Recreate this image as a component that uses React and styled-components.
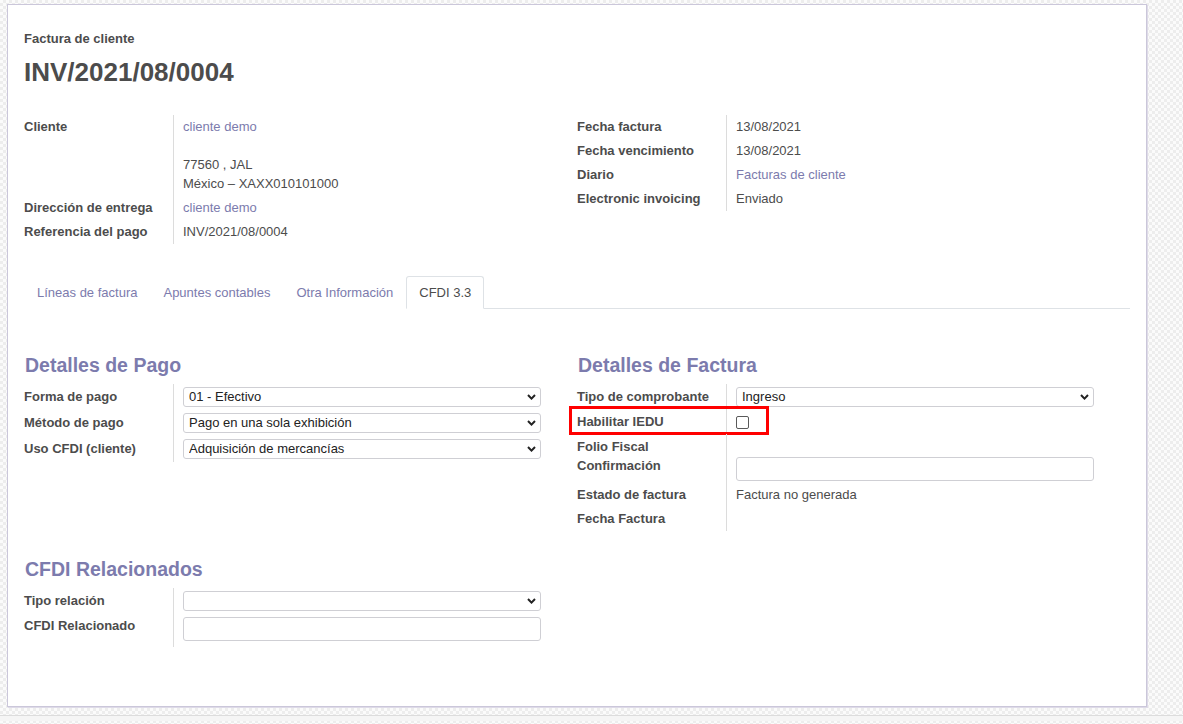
import React from "react";
import styled, { createGlobalStyle } from "styled-components";

const GlobalStyle = createGlobalStyle`
  html, body { margin: 0; padding: 0; }
  body {
    font-family: "Liberation Sans", Arial, sans-serif;
    font-size: 13px;
    color: #4c4c4c;
    background: repeating-conic-gradient(#ededed 0% 25%, #fbfbfb 0% 50%) 0 0 / 6px 6px;
  }
`;

const Page = styled.div`
  height: 724px;
  display: flex;
  flex-direction: column;
  overflow: hidden;
`;

const SheetArea = styled.div`
  height: 715px;
  padding: 4px 0 0 7px;
  box-sizing: border-box;
`;

const BottomStrip = styled.div`
  height: 5px;
  border-top: 1px solid #dcdcdc;
  background: #f5f5f5;
`;

const Sheet = styled.div`
  width: 1140px;
  height: 703px;
  box-sizing: border-box;
  background: #fff;
  border: 1px solid #cbc7da;
  box-shadow: 1px 1px 0 #dedbe8;
  padding: 24px 16px 0;
`;

const Subtitle = styled.div`
  font-weight: bold;
  line-height: 20px;
`;

const Title = styled.h1`
  margin: 8px 0 0;
  font-size: 26px;
  line-height: 31px;
  font-weight: bold;
  color: #4c4c4c;
`;

const Columns = styled.div`
  display: grid;
  grid-template-columns: 1fr 1fr;
  margin-top: ${(p) => p.$mt || 0}px;
`;

const Group = styled.div`
  padding-right: 36px;
  display: flex;
  flex-direction: column;
`;

const Row = styled.div`
  position: relative;
  display: grid;
  grid-template-columns: 150px 1fr;
  min-height: ${(p) => p.$h || 24}px;
  align-items: ${(p) => (p.$top ? "start" : "center")};
`;

const Label = styled.div`
  align-self: stretch;
  display: flex;
  align-items: ${(p) => (p.$top ? "flex-start" : "center")};
  padding-top: ${(p) => p.$pt || 0}px;
  font-weight: bold;
  line-height: ${(p) => p.$lh || 20}px;
  border-right: 1px solid #dcdcdc;
  box-sizing: border-box;
`;

const Value = styled.div`
  padding-left: 9px;
  padding-top: ${(p) => p.$pt || 0}px;
  padding-bottom: ${(p) => p.$pb || 0}px;
  line-height: ${(p) => p.$lh || 20}px;
  color: ${(p) => (p.$link ? "#7c7bad" : "#4c4c4c")};
`;

const Link = styled.div`
  color: #7c7bad;
`;

const Address = styled.div`
  line-height: 19px;
`;

const TabList = styled.div`
  display: flex;
  margin-top: 32px;
  border-bottom: 1px solid #dee2e6;
`;

const Tab = styled.div`
  height: 33px;
  box-sizing: border-box;
  margin-bottom: -1px;
  padding: 0 12px;
  line-height: 31px;
  border: 1px solid ${(p) => (p.$active ? "#dee2e6" : "transparent")};
  border-bottom-color: ${(p) => (p.$active ? "#fff" : "transparent")};
  border-radius: 3px 3px 0 0;
  background: #fff;
  color: ${(p) => (p.$active ? "#4c4c4c" : "#7c7bad")};
`;

const SectionTitle = styled.h2`
  margin: ${(p) => p.$mt || 0}px 0 6.5px;
  padding-left: 1px;
  font-size: 19.5px;
  line-height: 23.5px;
  font-weight: bold;
  color: #7c7bad;
`;

const SelectWrap = styled.div`
  position: relative;
  height: 20px;
`;

const NativeSelect = styled.select`
  appearance: none;
  -webkit-appearance: none;
  width: 100%;
  height: 20px;
  box-sizing: border-box;
  margin: 0;
  padding: 0 22px 0 5px;
  border: 1px solid #cfcfd4;
  border-radius: 3px;
  background: #fff;
  font-family: inherit;
  font-size: 13px;
  line-height: 18px;
  color: #222;
  outline: none;
`;

const Chevron = styled.svg`
  position: absolute;
  right: 5px;
  top: 7px;
  pointer-events: none;
`;

const TextInput = styled.input`
  display: block;
  width: 100%;
  height: 24px;
  box-sizing: border-box;
  margin: 0;
  border: 1px solid #cfcfd4;
  border-radius: 3px;
  background: #fff;
  font-family: inherit;
  font-size: 13px;
  outline: none;
`;

const CheckBox = styled.input`
  appearance: none;
  -webkit-appearance: none;
  display: block;
  width: 13px;
  height: 13px;
  margin: 0;
  box-sizing: border-box;
  border: 1px solid #5a5a5a;
  border-radius: 2px;
  background: #fff;
`;

const Highlight = styled.span`
  position: absolute;
  left: -8px;
  top: -4px;
  width: 200px;
  height: 29px;
  box-sizing: border-box;
  border: 3px solid #ff0000;
  pointer-events: none;
`;

function Select({ value }) {
  return (
    <SelectWrap>
      <NativeSelect defaultValue={value}>
        <option value={value}>{value}</option>
      </NativeSelect>
      <Chevron width="9" height="6" viewBox="0 0 9 6">
        <path d="M1 1 L4.5 4.6 L8 1" fill="none" stroke="#222" strokeWidth="2" />
      </Chevron>
    </SelectWrap>
  );
}

export default function App() {
  return (
    <Page>
      <GlobalStyle />
      <SheetArea>
        <Sheet>
          <Subtitle>Factura de cliente</Subtitle>
          <Title>INV/2021/08/0004</Title>

          <Columns $mt={27}>
            <Group>
              <Row $top>
                <Label $top $pt={2}>Cliente</Label>
                <Value $pt={2} $pb={3} $lh={19}>
                  <Link>cliente demo</Link>
                  <Address>
                    <br />
                    77560 , JAL
                    <br />
                    México – XAXX010101000
                  </Address>
                </Value>
              </Row>
              <Row>
                <Label>Dirección de entrega</Label>
                <Value $link>cliente demo</Value>
              </Row>
              <Row>
                <Label>Referencia del pago</Label>
                <Value>INV/2021/08/0004</Value>
              </Row>
            </Group>
            <Group>
              <Row>
                <Label>Fecha factura</Label>
                <Value>13/08/2021</Value>
              </Row>
              <Row>
                <Label>Fecha vencimiento</Label>
                <Value>13/08/2021</Value>
              </Row>
              <Row>
                <Label>Diario</Label>
                <Value $link>Facturas de cliente</Value>
              </Row>
              <Row>
                <Label>Electronic invoicing</Label>
                <Value>Enviado</Value>
              </Row>
            </Group>
          </Columns>

          <TabList>
            <Tab>Líneas de factura</Tab>
            <Tab>Apuntes contables</Tab>
            <Tab>Otra Información</Tab>
            <Tab $active>CFDI 3.3</Tab>
          </TabList>

          <Columns>
            <Group>
              <SectionTitle $mt={45}>Detalles de Pago</SectionTitle>
              <Row $h={26}>
                <Label>Forma de pago</Label>
                <Value>
                  <Select value="01 - Efectivo" />
                </Value>
              </Row>
              <Row $h={26}>
                <Label>Método de pago</Label>
                <Value>
                  <Select value="Pago en una sola exhibición" />
                </Value>
              </Row>
              <Row $h={26}>
                <Label>Uso CFDI (cliente)</Label>
                <Value>
                  <Select value="Adquisición de mercancías" />
                </Value>
              </Row>
            </Group>
            <Group>
              <SectionTitle $mt={45}>Detalles de Factura</SectionTitle>
              <Row $h={26}>
                <Label>Tipo de comprobante</Label>
                <Value>
                  <Select value="Ingreso" />
                </Value>
              </Row>
              <Row $h={24}>
                <Label>Habilitar IEDU</Label>
                <Value>
                  <CheckBox type="checkbox" readOnly />
                </Value>
                <Highlight />
              </Row>
              <Row $h={23}>
                <Label $pt={3}>Folio Fiscal</Label>
                <Value />
              </Row>
              <Row $h={26} $top>
                <Label $top $lh={18.5}>Confirmación</Label>
                <Value $pb={2}>
                  <TextInput type="text" />
                </Value>
              </Row>
              <Row>
                <Label>Estado de factura</Label>
                <Value>Factura no generada</Value>
              </Row>
              <Row>
                <Label>Fecha Factura</Label>
                <Value />
              </Row>
            </Group>
          </Columns>

          <Columns>
            <Group>
              <SectionTitle $mt={27}>CFDI Relacionados</SectionTitle>
              <Row $h={26}>
                <Label>Tipo relación</Label>
                <Value>
                  <Select value="" />
                </Value>
              </Row>
              <Row $h={33} $top>
                <Label $top $pt={2} $lh={19}>CFDI Relacionado</Label>
                <Value $pt={3}>
                  <TextInput type="text" />
                </Value>
              </Row>
            </Group>
            <div />
          </Columns>
        </Sheet>
      </SheetArea>
      <BottomStrip />
    </Page>
  );
}
